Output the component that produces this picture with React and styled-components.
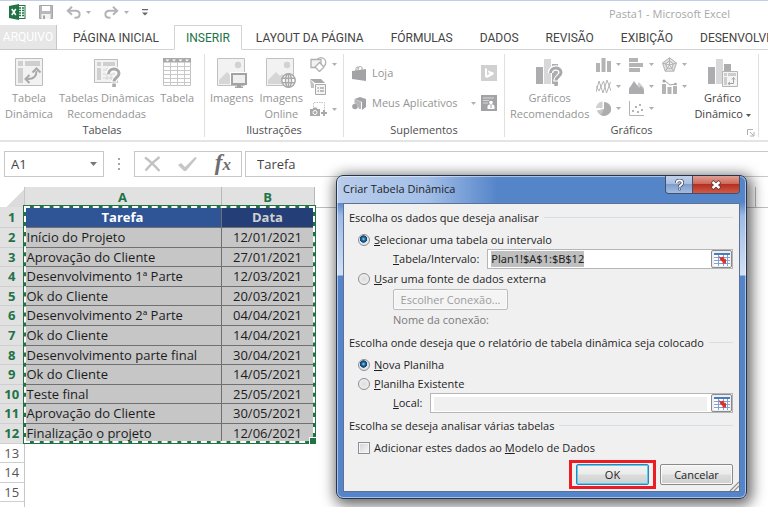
import React, { useEffect, useRef, useState } from 'react';
import styled, { createGlobalStyle, css } from 'styled-components';

const TABS = ['LAYOUT DA PÁGINA', 'FÓRMULAS', 'DADOS', 'REVISÃO', 'EXIBIÇÃO', 'DESENVOLVEDOR'];

const TASKS = [
  ['Início do Projeto', '12/01/2021'],
  ['Aprovação do Cliente', '27/01/2021'],
  ['Desenvolvimento 1ª Parte', '12/03/2021'],
  ['Ok do Cliente', '20/03/2021'],
  ['Desenvolvimento 2ª Parte', '04/04/2021'],
  ['Ok do Cliente', '14/04/2021'],
  ['Desenvolvimento parte final', '30/04/2021'],
  ['Ok do Cliente', '14/05/2021'],
  ['Teste final', '25/05/2021'],
  ['Aprovação do Cliente', '30/05/2021'],
  ['Finalização o projeto', '12/06/2021'],
];

/* ---------- icons ---------- */

const ExcelLogo = () => (
  <svg width="17" height="16" viewBox="0 0 17 16">
    <rect x="8" y="1.5" width="8" height="13" fill="#fff" stroke="#217346" />
    <path d="M10 4h2M13 4h2M10 6.5h2M13 6.5h2M10 9h2M13 9h2M10 11.5h2M13 11.5h2" stroke="#217346" strokeWidth="1.4" />
    <path d="M0 2l10-2v16L0 14z" fill="#217346" />
    <path d="M2.8 5l4 6M6.8 5l-4 6" stroke="#fff" strokeWidth="1.5" />
  </svg>
);

const SaveIcon = () => (
  <svg width="14" height="14" viewBox="0 0 14 14">
    <path d="M.5.5h13v13H.5z" fill="#b9b9bb" stroke="#a6a6a8" />
    <path d="M3 1h8v5H3z" fill="#fff" />
    <path d="M2.5 9h9v5h-9z" fill="#f3f3f3" />
    <path d="M4 10.5h2V14H4z" fill="#a6a6a8" />
  </svg>
);

const UndoIcon = ({ flip }) => (
  <svg width="15" height="13" viewBox="0 0 15 13">
    <g transform={flip ? 'translate(15 0) scale(-1 1)' : undefined} fill="none" stroke="#b4b4b6" strokeWidth="2">
      <path d="M6 .8L1.8 4.8 6 8.8" />
      <path d="M2 4.8h7.5c5.5 0 5.5 7 0 7H8.5" />
    </g>
  </svg>
);

const Caret = ({ color = '#b0b0b0' }) => (
  <svg width="5" height="3" viewBox="0 0 5 3">
    <path d="M0 0h5L2.500 3z" fill={color} />
  </svg>
);

const CustomizeIcon = () => (
  <svg width="6" height="7" viewBox="0 0 6 7">
    <path d="M0 0h6v1.200H0zM0 3.500h6L3 6.500z" fill="#666" />
  </svg>
);

const PivotIcon = () => (
  <svg width="28" height="28" viewBox="0 0 28 28">
    <path d="M.5.5h27v27H.5z" fill="#f2f2f2" stroke="#bdbdbd" />
    <path d="M3 3h5v5H3zM10 3h15v5H10zM3 10h5v15H3z" fill="#cfcfcf" />
    <path d="M12 21c7 .5 9.500-3 9.500-8" fill="none" stroke="#a9a9ab" strokeWidth="2" />
    <path d="M17.500 14.500l4-4 4 4M14.500 17l-4 4 4 4" fill="none" stroke="#a9a9ab" strokeWidth="2" />
  </svg>
);

const QuestionMark = ({ x, y }) => (
  <g transform={`translate(${x} ${y})`} fill="none">
    <path d="M1.500 6C1.500-.5 12-.5 12 5.500c0 4-5 4-5 9" stroke="#fff" strokeWidth="5.500" />
    <path d="M1.500 6C1.500-.5 12-.5 12 5.500c0 4-5 4-5 8" stroke="#a9a9ab" strokeWidth="3" />
    <path d="M5.300 15.500h3.500V19H5.300z" fill="#a9a9ab" />
  </g>
);

const PivotHelpIcon = () => (
  <svg width="28" height="30" viewBox="0 0 28 30">
    <path d="M1.500 1.500h23v23h-23z" fill="#f2f2f2" stroke="#bdbdbd" />
    <path d="M4 4h4v4H4zM10 4h12v4H10zM4 10h4v12H4z" fill="#cfcfcf" />
    <path d="M10 12h12M10 16h12M10 20h12M14 10v12M18 10v12" stroke="#d4d4d4" />
    <QuestionMark x="14" y="10" />
  </svg>
);

const TableIcon = () => (
  <svg width="28" height="28" viewBox="0 0 28 28">
    <path d="M.5.5h27v27H.5z" fill="#fff" stroke="#c2c2c2" />
    <path d="M0 0h28v4.500H0z" fill="#a9a9ab" />
    <path d="M2.500 1.500h4l-2 2zM9 1.500h4l-2 2zM15.500 1.500h4l-2 2zM22 1.500h4l-2 2z" fill="#fff" />
    <path d="M0 8.500h28M0 12.500h28M0 16.500h28M0 20.500h28M0 24.500h28M7.500 4v24M14.500 4v24M21.500 4v24" stroke="#c8c8c8" />
  </svg>
);

const PictureIcon = ({ online }) => (
  <svg width="30" height="30" viewBox="0 0 30 30">
    <path d="M.5.5h27v27H.5z" fill="#f3f2f3" stroke="#c0c0c0" />
    <path d="M2 26v-4l8-8 4 4 2-2 10 10z" fill="#d6d6d6" />
    <circle cx="21" cy="7" r="3.200" fill="#d2d2d2" />
    {online ? (
      <g fill="#fff" stroke="#a9a9ab" strokeWidth="1.500">
        <circle cx="22.500" cy="22.500" r="6.700" />
        <ellipse cx="22.500" cy="22.500" rx="3" ry="6.700" />
        <path d="M16 20.300h13M16 24.700h13M22.500 16v13" />
      </g>
    ) : (
      <g>
        <path d="M13 14h17v13H13z" fill="#fff" />
        <path d="M15 16h14v10H15z" fill="#efefef" stroke="#a3a3a5" strokeWidth="2" />
        <path d="M20 27h4v1.500h2V30h-8v-1.500h2z" fill="#a3a3a5" />
      </g>
    )}
  </svg>
);

const ShapesIcon = () => (
  <svg width="17" height="15" viewBox="0 0 17 15" fill="#fff" stroke="#b0b0b2" strokeWidth="1.300">
    <circle cx="11" cy="5.500" r="4.800" />
    <path d="M1 2.500h10v8H1z" fill="#f2f2f2" />
    <path d="M9.500 5.500L14 10l-4.500 4.500L5 10z" />
  </svg>
);

const SmartArtIcon = () => (
  <svg width="17" height="16" viewBox="0 0 17 16">
    <path d="M0 0h11l4 4H5z" fill="#a9a9ab" />
    <path d="M0 0l4 5v4H1z" fill="#c2c2c2" />
    <path d="M5.500 5.500h10v10h-10z" fill="#f4f4f4" stroke="#a9a9ab" />
    <path d="M7.500 9h1.500M10 9h4M7.500 12h1.500M10 12h4" stroke="#a9a9ab" strokeWidth="1.300" />
  </svg>
);

const ScreenshotIcon = () => (
  <svg width="17" height="15" viewBox="0 0 17 15">
    <path d="M3.500 5V.5h11V8" fill="none" stroke="#c4c4c4" strokeDasharray="1.500 1" />
    <path d="M0 7h2.500l1-1.500h3l1 1.500H10v7H0z" fill="#a9a9ab" />
    <circle cx="5" cy="10.500" r="2" fill="#a9a9ab" stroke="#fff" />
    <path d="M14 8v6M11 11h6" stroke="#a9a9ab" strokeWidth="2" />
  </svg>
);

const StoreIcon = () => (
  <svg width="15" height="15" viewBox="0 0 15 15">
    <path d="M0 5l14-2v12L0 13z" fill="#a3a3a5" />
    <path d="M4 5V2.500C4 .5 7 .5 7 2.500M6 4.500V2c0-2 4-2 4 0v2" fill="none" stroke="#a3a3a5" />
  </svg>
);

const AppsIcon = () => (
  <svg width="15" height="15" viewBox="0 0 15 15">
    <path d="M2.500 3L8 1l6 2v8l-4 3V6z" fill="#a3a3a5" />
    <path d="M2.500 3L9 6v7H7l-2-5-2.500-.5z" fill="#b5b5b7" />
    <circle cx="3" cy="10.500" r="2.800" fill="#a3a3a5" />
  </svg>
);

const BingIcon = () => (
  <svg width="16" height="16" viewBox="0 0 16 16">
    <path d="M0 0h16v16H0z" fill="#d0d0d0" />
    <path d="M4 3l2 .7v6.500l3-1.700-1.500-.8L6.800 5.500 12.500 7.500V9.500L6 13l-2-1.200z" fill="#fff" />
  </svg>
);

const PeopleIcon = () => (
  <svg width="16" height="16" viewBox="0 0 16 16">
    <path d="M0 0h16v16H0z" fill="#a3a3a5" />
    <path d="M2 3h11M2 5.500h6M2 8h5" stroke="#d8d8d8" />
    <circle cx="10" cy="7.500" r="1.800" fill="#fff" />
    <path d="M6.500 14v-3l1.500-1.500h4l1.500 1.500v3z" fill="#fff" />
    <path d="M10 10v3" stroke="#a3a3a5" />
  </svg>
);

const ChartHelpIcon = () => (
  <svg width="30" height="30" viewBox="0 0 30 30">
    <path d="M1 9h7v17H1zM17 6h6v20h-6z" fill="#adadaf" />
    <path d="M9 1h7v25H9z" fill="#d8d8d8" />
    <QuestionMark x="14" y="9" />
  </svg>
);

const PivotChartIcon = () => (
  <svg width="30" height="30" viewBox="0 0 30 30">
    <path d="M0 9h7v17H0zM16 6h7v9h-7z" fill="#adadaf" />
    <path d="M8 1h7v25H8z" fill="#d8d8d8" />
    <path d="M14.500 13.500h15v15h-15z" fill="#f4f4f4" stroke="#b4b4b4" />
    <path d="M16 15h3v3h-3zM20 15h8v3h-8zM16 19h3v8h-3z" fill="#cdcdcd" />
    <path d="M20.500 25.500h5V20M24 21.500l1.500-2 1.500 2M22 24l-2 1.500 2 1.500" fill="none" stroke="#a3a3a5" />
  </svg>
);

const charts = {
  column: <path d="M0 6h4v9H0zM5.500 1h4v14h-4zM11 4h4v11h-4z" fill="#b4b4b6" />,
  bar: <path d="M0 1h9v4H0zM0 6h14v4H0zM0 11h11v4H0z" fill="#b4b4b6" />,
  radar: (
    <g fill="#e2e2e2" stroke="#b2b2b4">
      <path d="M7.500.8l7 5.200-2.700 8.200H3.200L.5 6z" />
      <path d="M7.500 4l3.800 2.800-1.500 4.500H5.200L3.700 6.800z" fill="#f0f0f0" />
      <path d="M7.500.8V8M14.500 6l-7 2M11.800 14.200L7.500 8M3.200 14.200L7.500 8M.5 6l7 2" />
    </g>
  ),
  line: (
    <g fill="none" stroke="#b4b4b6">
      <path d="M0 13l3-11 4 12 4-13 4 11" />
      <path d="M0 7l3 5L7.500 2l3 12 4-11" />
    </g>
  ),
  area: (
    <g>
      <path d="M0 9l3-3 3 5 4-8 5 6v5H0z" fill="#cfcfcf" />
      <path d="M0 15v-5l5-8 5 7 2-2 3 4v4z" fill="#adadaf" />
    </g>
  ),
  combo: (
    <g>
      <path d="M0 5h4v10H0zM5.500 8h4v7h-4zM11 7h4v8h-4z" fill="#b4b4b6" />
      <path d="M1 2h2l5 4 6-1" fill="none" stroke="#a3a3a5" />
      <circle cx="2" cy="2" r="1.500" fill="#a3a3a5" />
      <circle cx="13.500" cy="5" r="1.300" fill="#a3a3a5" />
    </g>
  ),
  pie: (
    <g>
      <path d="M8 1a7 7 0 1 1-6.500 9L8 8z" fill="#adadaf" />
      <path d="M6.500.5v6.500H0A7 7 0 0 1 6.500.5z" fill="#d0d0d0" />
      <path d="M8 8l-7 1.500A7 7 0 0 0 5 14z" fill="#c6c6c6" />
    </g>
  ),
  scatter: (
    <g>
      <path d="M.5 0v14.500H15" fill="none" stroke="#b4b4b6" />
      <path d="M3 9h2v2H3zM6 5h2v2H6zM8 10h2v2H8zM10 3h2v2h-2zM12 8h2v2h-2z" fill="#b4b4b6" />
    </g>
  ),
};

const ChartIcon = ({ kind }) => (
  <svg width="15" height="15" viewBox="0 0 15 15">
    {charts[kind]}
  </svg>
);

const LauncherIcon = () => (
  <svg width="8" height="8" viewBox="0 0 8 8">
    <path d="M.5 6V.5H6M3 3l3.500 3.500M7 3v4H3" fill="none" stroke="#b0b0b0" />
  </svg>
);

const CancelIcon = () => (
  <svg width="17" height="16" viewBox="0 0 17 16">
    <path d="M1 1.500C6 5 11 10 15.500 15M15.500 1C10 5 5 10 1.500 14.500" fill="none" stroke="#c2c2c2" strokeWidth="2.400" />
  </svg>
);

const EnterIcon = () => (
  <svg width="20" height="16" viewBox="0 0 20 16">
    <path d="M0 9l3-2 4 4L17 1l2 1L8 15H6z" fill="#c6c6c6" />
  </svg>
);

const RangeIcon = () => (
  <svg width="16" height="13" viewBox="0 0 16 13">
    <path d="M0 0h16v13H0z" fill="#fff" />
    <path d="M0 0h16v2H0z" fill="#4a7cc4" />
    <path d="M0 4.500h16M0 7.500h16M0 10.500h16M4.500 2v11M9.500 2v11M13.500 2v11" stroke="#7fa3d8" />
    <path d="M5 3l2 1.500L9 3.500l2 3 1-1v5H7.500l1.500-1-3-3z" fill="#d8322a" />
  </svg>
);

const HelpGlyph = () => (
  <svg width="9" height="12" viewBox="0 0 9 12" fill="none">
    <path d="M1.500 4C1.500.5 7.500.5 7.500 4c0 2-3 2-3 4" stroke="#4a5368" strokeWidth="3.400" />
    <path d="M1.500 4C1.500.5 7.500.5 7.500 4c0 2-3 2-3 4" stroke="#fff" strokeWidth="1.600" />
    <path d="M3.500 9h2v2h-2z" fill="#fff" stroke="#4a5368" strokeWidth=".7" />
  </svg>
);

const CloseGlyph = () => (
  <svg width="12" height="10" viewBox="0 0 12 10">
    <path d="M2 1.500l8 7M10 1.500l-8 7" stroke="#5d3a3a" strokeWidth="4" />
    <path d="M2.500 2l7 6M9.500 2l-7 6" stroke="#fff" strokeWidth="2.400" />
  </svg>
);

const GripIcon = () => (
  <svg width="10" height="10" viewBox="0 0 10 10">
    <path d="M1 10l9-9M5 10l5-5" stroke="#8f8f8f" strokeWidth="1.200" />
  </svg>
);

/* ---------- app ---------- */

const RibbonButton = ({ icon, lines, dark, caret }) => (
  <BigButton type="button" $dark={dark}>
    <IconBox>{icon}</IconBox>
    {lines.map((line, i) => (
      <span key={line}>
        {line}
        {caret && i === lines.length - 1 && (
          <>
            {' '}
            <Caret color="#555" />
          </>
        )}
      </span>
    ))}
  </BigButton>
);

const Ribbon = () => (
  <RibbonBar>
    <Group $width={205}>
      <Tools>
        <RibbonButton icon={<PivotIcon />} lines={['Tabela', 'Dinâmica']} />
        <RibbonButton icon={<PivotHelpIcon />} lines={['Tabelas Dinâmicas', 'Recomendadas']} />
        <RibbonButton icon={<TableIcon />} lines={['Tabela']} />
      </Tools>
      <GroupName>Tabelas</GroupName>
    </Group>
    <Group $width={139}>
      <Tools>
        <RibbonButton icon={<PictureIcon />} lines={['Imagens']} />
        <RibbonButton icon={<PictureIcon online />} lines={['Imagens', 'Online']} />
        <SmallGrid $columns={1}>
          <SmallButton type="button" aria-label="Formas">
            <ShapesIcon />
            <Caret />
          </SmallButton>
          <SmallButton type="button" aria-label="SmartArt">
            <SmartArtIcon />
          </SmallButton>
          <SmallButton type="button" aria-label="Instantâneo">
            <ScreenshotIcon />
            <Caret />
          </SmallButton>
        </SmallGrid>
      </Tools>
      <GroupName>Ilustrações</GroupName>
    </Group>
    <Group $width={161}>
      <Addins>
        <AddinRow>
          <SmallButton type="button">
            <StoreIcon />
            Loja
          </SmallButton>
          <SmallButton type="button" aria-label="Bing Maps">
            <BingIcon />
          </SmallButton>
        </AddinRow>
        <AddinRow>
          <SmallButton type="button">
            <AppsIcon />
            Meus Aplicativos
          </SmallButton>
          <SmallButton type="button" aria-label="Mais aplicativos">
            <Caret />
            <PeopleIcon />
          </SmallButton>
        </AddinRow>
      </Addins>
      <GroupName>Suplementos</GroupName>
    </Group>
    <Group $width={254}>
      <Tools>
        <RibbonButton icon={<ChartHelpIcon />} lines={['Gráficos', 'Recomendados']} />
        <SmallGrid $columns={3}>
          {['column', 'bar', 'radar', 'line', 'area', 'combo', 'pie', 'scatter'].map((kind) => (
            <SmallButton type="button" key={kind} aria-label={kind}>
              <ChartIcon kind={kind} />
              <Caret />
            </SmallButton>
          ))}
        </SmallGrid>
        <RibbonButton icon={<PivotChartIcon />} lines={['Gráfico', 'Dinâmico']} dark caret />
      </Tools>
      <GroupFooter>
        <GroupName>Gráficos</GroupName>
        <Launcher type="button" aria-label="Opções de gráficos">
          <LauncherIcon />
        </Launcher>
      </GroupFooter>
    </Group>
  </RibbonBar>
);

const Worksheet = () => (
  <SheetArea>
    <Grid>
      <colgroup>
        <col width="24" />
        <col width="197" />
        <col width="93" />
        <col width="441" />
        <col />
      </colgroup>
      <thead>
        <tr>
          <Corner />
          <ColumnHead $on>A</ColumnHead>
          <ColumnHead $on>B</ColumnHead>
          <ColumnHead />
          <ColumnHead />
        </tr>
      </thead>
      <tbody>
        <tr>
          <RowHead $on>1</RowHead>
          <TitleCell>Tarefa</TitleCell>
          <TitleCell $dim>Data</TitleCell>
        </tr>
        {TASKS.map(([task, date], i) => (
          <tr key={date}>
            <RowHead $on>{i + 2}</RowHead>
            <Cell>{task}</Cell>
            <Cell $center>{date}</Cell>
          </tr>
        ))}
        {[13, 14, 15, 16].map((n) => (
          <tr key={n}>
            <RowHead>{n < 16 ? n : ''}</RowHead>
          </tr>
        ))}
      </tbody>
    </Grid>
    <Selection />
  </SheetArea>
);

const PivotDialog = () => {
  const rangeInput = useRef(null);
  const [source, setSource] = useState('range');
  const [target, setTarget] = useState('new');

  useEffect(() => {
    rangeInput.current.select();
  }, []);

  return (
    <Dialog role="dialog" aria-labelledby="dialog-title">
      <DialogBar>
        <DialogTitle id="dialog-title">Criar Tabela Dinâmica</DialogTitle>
        <WindowButtons>
          <WindowButton type="button" aria-label="Ajuda">
            <HelpGlyph />
          </WindowButton>
          <WindowButton type="button" aria-label="Fechar" $close>
            <CloseGlyph />
          </WindowButton>
        </WindowButtons>
      </DialogBar>
      <DialogBody>
        <Heading>Escolha os dados que deseja analisar</Heading>
        <Option>
          <Radio type="radio" name="source" checked={source === 'range'} onChange={() => setSource('range')} />
          <span>
            <u>S</u>elecionar uma tabela ou intervalo
          </span>
        </Option>
        <Field>
          <label htmlFor="range">
            <u>T</u>abela/Intervalo:
          </label>
          <RangeBox>
            <RangeInput id="range" ref={rangeInput} defaultValue="Plan1!$A$1:$B$12" />
            <RangeButton type="button" aria-label="Selecionar intervalo">
              <RangeIcon />
            </RangeButton>
          </RangeBox>
        </Field>
        <Option>
          <Radio type="radio" name="source" checked={source === 'external'} onChange={() => setSource('external')} />
          <span>
            <u>U</u>sar uma fonte de dados externa
          </span>
        </Option>
        <Indent>
          <ConnectionButton type="button" disabled>
            Escolher Conexão...
          </ConnectionButton>
          <Muted>Nome da conexão:</Muted>
        </Indent>
        <Heading>Escolha onde deseja que o relatório de tabela dinâmica seja colocado</Heading>
        <Option>
          <Radio type="radio" name="target" checked={target === 'new'} onChange={() => setTarget('new')} />
          <span>
            <u>N</u>ova Planilha
          </span>
        </Option>
        <Option>
          <Radio type="radio" name="target" checked={target === 'existing'} onChange={() => setTarget('existing')} />
          <span>
            <u>P</u>lanilha Existente
          </span>
        </Option>
        <Field>
          <label htmlFor="place">
            <u>L</u>ocal:
          </label>
          <RangeBox>
            <RangeInput id="place" disabled />
            <RangeButton type="button" aria-label="Selecionar local">
              <RangeIcon />
            </RangeButton>
          </RangeBox>
        </Field>
        <Heading>Escolha se deseja analisar várias tabelas</Heading>
        <Option>
          <Check type="checkbox" />
          <span>
            Adicionar estes dados ao <u>M</u>odelo de Dados
          </span>
        </Option>
        <Actions>
          <Highlight>
            <PushButton type="button" $primary>
              OK
            </PushButton>
          </Highlight>
          <PushButton type="button">Cancelar</PushButton>
        </Actions>
        <Grip>
          <GripIcon />
        </Grip>
      </DialogBody>
    </Dialog>
  );
};

const App = () => (
  <Page>
    <GlobalStyle />
    <TitleBar>
      <ExcelLogo />
      <QuickButton type="button" aria-label="Salvar">
        <SaveIcon />
      </QuickButton>
      <QuickButton type="button" aria-label="Desfazer">
        <UndoIcon />
        <Caret />
      </QuickButton>
      <QuickButton type="button" aria-label="Refazer">
        <UndoIcon flip />
        <Caret />
      </QuickButton>
      <QuickButton type="button" aria-label="Personalizar">
        <CustomizeIcon />
      </QuickButton>
      <WindowTitle>Pasta1 - Microsoft Excel</WindowTitle>
    </TitleBar>
    <TabBar>
      <FileTab type="button">ARQUIVO</FileTab>
      <Tab type="button" $first>
        PÁGINA INICIAL
      </Tab>
      <Tab type="button" $active>
        INSERIR
      </Tab>
      {TABS.map((name) => (
        <Tab type="button" key={name}>
          {name}
        </Tab>
      ))}
    </TabBar>
    <Ribbon />
    <FormulaBar>
      <NameBox>
        <BarInput aria-label="Caixa de nome" defaultValue="A1" />
        <BarButton type="button" aria-label="Nomes">
          <svg width="7" height="4" viewBox="0 0 7 4">
            <path d="M0 0h7L3.500 4z" fill="#777" />
          </svg>
        </BarButton>
      </NameBox>
      <Dots>
        <i />
        <i />
        <i />
      </Dots>
      <FxBox>
        <BarButton type="button" aria-label="Cancelar edição">
          <CancelIcon />
        </BarButton>
        <BarButton type="button" aria-label="Inserir valor">
          <EnterIcon />
        </BarButton>
        <BarButton type="button">
          <Fx>
            f<small>x</small>
          </Fx>
        </BarButton>
      </FxBox>
      <FormulaBox>
        <BarInput aria-label="Fórmula" defaultValue="Tarefa" />
      </FormulaBox>
    </FormulaBar>
    <Worksheet />
    <PivotDialog />
  </Page>
);

/* ---------- styles ---------- */

const GlobalStyle = createGlobalStyle`
  * {
    box-sizing: border-box;
  }
  body {
    margin: 0;
    background: #fff;
    color: #444;
    font: 11px/16px 'Open Sans', 'Noto Sans', sans-serif;
  }
  button, input {
    margin: 0;
    padding: 0;
    border: none;
    border-radius: 0;
    background: none;
    color: inherit;
    font: inherit;
    outline: none;
  }
  svg {
    flex: none;
  }
`;
const Page = styled.div`
  position: relative;
  display: flex;
  flex-direction: column;
  height: 100vh;
  overflow: hidden;
`;

const TitleBar = styled.header`
  display: flex;
  align-items: center;
  gap: 13px;
  height: 25px;
  padding: 0 38px 2px 9px;
  border-top: 1px solid #c3cde6;
`;
const QuickButton = styled.button`
  display: flex;
  align-items: center;
  gap: 5px;
`;
const WindowTitle = styled.span`
  margin: 3px 0 0 auto;
  color: #a8a8a8;
`;

const TabBar = styled.nav`
  display: flex;
  height: 25px;
  font: 12px/16px Roboto, 'Open Sans', sans-serif;
  &::after {
    content: '';
    flex: 1;
    border-bottom: 1px solid #d4d4d4;
  }
`;
const Tab = styled.button`
  flex: none;
  padding: 1px 13px 0 14px;
  border-bottom: 1px solid #d4d4d4;
  ${({ $first }) =>
    $first &&
    css`
      padding: 1px 15px 0 16px;
    `}
  ${({ $active }) =>
    $active &&
    css`
      padding: 0 11px;
      border: 1px solid #d4d4d4;
      border-bottom-color: #fff;
      color: #217346;
    `}
`;
const FileTab = styled.button`
  flex: none;
  width: 57px;
  border-right: 1px solid #c6c6c6;
  border-bottom: 1px solid #c6c6c6;
  background: #e6e6e6;
  color: #fff;
`;

const RibbonBar = styled.div`
  display: flex;
  height: 92px;
  padding: 4px 0 3px;
  border-bottom: 2px solid #e4e4e4;
  color: #959595;
`;
const Group = styled.section`
  display: flex;
  flex-direction: column;
  justify-content: space-between;
  flex: none;
  width: ${({ $width }) => $width}px;
  border-right: 1px solid #e0e0e0;
`;
const Tools = styled.div`
  display: flex;
  align-items: flex-start;
  gap: 6px;
  padding-left: 5px;
`;
const BigButton = styled.button`
  display: flex;
  flex-direction: column;
  align-items: center;
  padding-top: 4px;
  color: ${({ $dark }) => ($dark ? '#444' : 'inherit')};
  white-space: nowrap;
  span svg {
    vertical-align: middle;
  }
`;
const IconBox = styled.div`
  height: 32px;
`;
const GroupName = styled.div`
  padding-bottom: 1px;
  text-align: center;
  line-height: 12px;
  color: #4e4e4e;
`;
const GroupFooter = styled.div`
  position: relative;
`;
const Launcher = styled.button`
  position: absolute;
  right: 3px;
  bottom: 0;
  line-height: 8px;
`;
const SmallGrid = styled.div`
  display: grid;
  grid-template-columns: repeat(${({ $columns }) => $columns}, auto);
  gap: 7px 8px;
  padding: 3px 1px 0;
`;
const SmallButton = styled.button`
  display: flex;
  align-items: center;
  gap: 5px;
`;
const Addins = styled.div`
  display: flex;
  flex-direction: column;
  gap: 14px;
  padding: 11px 7px 0 8px;
`;
const AddinRow = styled.div`
  display: flex;
  justify-content: space-between;
`;

const FormulaBar = styled.div`
  display: flex;
  height: 45px;
  padding: 9px 0 10px 4px;
  font-size: 13px;
`;
const NameBox = styled.div`
  display: flex;
  width: 100px;
  padding: 0 6px;
  border: 1px solid #c8c8c8;
`;
const BarInput = styled.input`
  flex: 1;
  min-width: 0;
`;
const BarButton = styled.button`
  display: flex;
  align-items: center;
`;
const Dots = styled.div`
  display: flex;
  flex-direction: column;
  justify-content: center;
  gap: 3px;
  padding: 0 14px;
  i {
    width: 2px;
    height: 2px;
    background: #a6a6a6;
  }
`;
const FxBox = styled.div`
  display: flex;
  justify-content: space-between;
  width: 108px;
  padding: 0 10px 0 9px;
  border: 1px solid #c8c8c8;
`;
const Fx = styled.em`
  font: italic bold 23px/24px 'Liberation Serif', serif;
  color: #6e6e6e;
  small {
    font-size: 17px;
  }
`;
const FormulaBox = styled.div`
  display: flex;
  flex: 1;
  margin-left: 3px;
  padding-left: 11px;
  border: 1px solid #c8c8c8;
  border-right: none;
`;

const SheetArea = styled.main`
  position: relative;
  flex: 1;
  min-height: 0;
`;
const Grid = styled.table`
  width: 100%;
  border-collapse: collapse;
  table-layout: fixed;
  color: #1c1c1c;
  font-size: 13px;
  line-height: 16px;
  tr {
    height: 20px;
  }
  tbody tr:nth-child(5n),
  tbody tr:nth-child(5n + 3) {
    height: 19px;
  }
  th,
  td {
    padding: 0;
  }
`;
const Corner = styled.td`
  background: linear-gradient(135deg, #fff 60%, #dcdcdc 60%);
  border-right: 1px solid #c6c6c6;
`;
const ColumnHead = styled.th`
  border-right: 1px solid #b8b8b8;
  border-bottom: 1px solid #bdbdbd;
  &:last-child {
    border-right: none;
  }
  ${({ $on }) =>
    $on &&
    css`
      background: #e1e1e1;
      color: #217346;
    `}
`;
const RowHead = styled.th`
  border-right: 1px solid #c6c6c6;
  border-bottom: 1px solid #cfcfcf;
  background: ${({ $on }) => ($on ? '#e1e1e1' : '#fff')};
  color: ${({ $on }) => ($on ? '#217346' : '#555')};
  font-weight: ${({ $on }) => ($on ? 700 : 400)};
`;
const Cell = styled.td`
  && {
    padding-left: ${({ $center }) => ($center ? 0 : 2)}px;
  }
  border: 1px solid #707070;
  background: #c6c6c6;
  text-align: ${({ $center }) => ($center ? 'center' : 'left')};
  white-space: nowrap;
`;
const TitleCell = styled.td`
  border: 1px solid #707070;
  background: ${({ $dim }) => ($dim ? '#243f77' : '#2f5597')};
  color: ${({ $dim }) => ($dim ? '#d0d0d0' : '#fff')};
  font-weight: 700;
  text-align: center;
`;
// marching ants round A1:B12, with the fill handle in its corner
const Selection = styled.div`
  position: absolute;
  top: 18px;
  left: 23px;
  width: 293px;
  height: 239px;
  border: 3px solid #217346;
  pointer-events: none;
  &::before {
    content: '';
    position: absolute;
    inset: -2px;
    border: 2px dashed #fff;
  }
  &::after {
    content: '';
    position: absolute;
    right: -4px;
    bottom: -4px;
    width: 6px;
    height: 6px;
    border: 1px solid #fff;
    background: #217346;
  }
`;

const Dialog = styled.section`
  position: absolute;
  top: 175px;
  left: 336px;
  width: 411px;
  padding: 0 6px 6px;
  border: 1px solid #26344d;
  border-radius: 7px;
  background:
    linear-gradient(90deg, #b9cdec, #a3bfe8 90px, rgba(84, 132, 200, 0) 160px) 0 0 / 100% 27px no-repeat,
    linear-gradient(#5585c9 26px, #9dbbe6 40px, #d3e1f5 99px, #5484c9 100px);
  box-shadow:
    inset 0 0 0 1px rgba(255, 255, 255, 0.5),
    2px 3px 14px 3px rgba(0, 0, 0, 0.6);
  color: #1e1e1e;
`;
const DialogBar = styled.div`
  display: flex;
  justify-content: space-between;
  align-items: flex-start;
  height: 27px;
`;
const DialogTitle = styled.h1`
  margin: 5px 0 0;
  font: inherit;
`;
const WindowButtons = styled.div`
  display: flex;
  border: 1px solid #44506a;
  border-top: none;
  border-radius: 0 0 4px 4px;
  overflow: hidden;
`;
const WindowButton = styled.button`
  display: flex;
  justify-content: center;
  align-items: center;
  width: ${({ $close }) => ($close ? 46 : 27)}px;
  height: 17px;
  border-right: ${({ $close }) => ($close ? 'none' : '1px solid #44506a')};
  background: ${({ $close }) =>
    $close
      ? 'linear-gradient(#e0a095, #cf6a5c 45%, #b5301f 50%, #cf5a48)'
      : 'linear-gradient(#c3d2ea, #a9bee0 45%, #7f9dcb 50%, #a4bce2)'};
`;
const DialogBody = styled.div`
  position: relative;
  padding: 1px 6px 2px 5px;
  border: 1px solid #5d7195;
  background: #f0f0f0;
`;
const Heading = styled.h2`
  display: flex;
  align-items: center;
  gap: 5px;
  height: 25px;
  margin: 0;
  font: inherit;
  white-space: nowrap;
  &::after {
    content: '';
    flex: 1;
    height: 1px;
    background: #d5dfe5;
  }
`;
const Option = styled.label`
  display: flex;
  align-items: center;
  gap: 4px;
  height: 19px;
  padding-left: 9px;
`;
const Radio = styled.input`
  appearance: none;
  width: 12px;
  height: 12px;
  border: 1px solid #8c8f94;
  border-radius: 50%;
  background: radial-gradient(#dcdcdc, #f6f6f6);
  &:checked {
    background: radial-gradient(circle at 45% 40%, #9fdcf5, #1f6fa8 20%, #143c66 42%, #dfe6ea 48%);
  }
`;
const Check = styled.input`
  appearance: none;
  width: 12px;
  height: 12px;
  border: 1px solid #8c8f94;
  background: linear-gradient(135deg, #cfd2d6, #f8f8f8);
  box-shadow: inset 0 0 0 1px #f4f4f4;
`;
const Field = styled.div`
  display: flex;
  align-items: center;
  gap: 8px;
  margin-left: 44px;
`;
const RangeBox = styled.div`
  display: flex;
  flex: 1;
  height: 20px;
  border: 1px solid #b4b6ba;
  background: #fff;
`;
const RangeInput = styled.input`
  flex: 1;
  min-width: 0;
  padding: 0 3px;
  font-family: 'Noto Sans', sans-serif;
  &::selection {
    background: #bfbfbf;
    color: #1e1e1e;
  }
  &:disabled {
    margin: 3px 4px 1px 3px;
    background: #f0f0f0;
  }
`;
const RangeButton = styled.button`
  display: flex;
  justify-content: center;
  align-items: center;
  width: 21px;
  border: 1px solid #8a8a8a;
  border-radius: 2px;
  background: #eee;
`;
const Indent = styled.div`
  margin: 1px 0 0 44px;
`;
const buttonFace = css`
  border: 1px solid #8a8a8a;
  border-radius: 2px;
  background: linear-gradient(#f3f3f3, #ebebeb 48%, #dcdcdc 52%, #d0d0d0);
  box-shadow: inset 0 0 0 1px #fafafa;
`;
const ConnectionButton = styled.button`
  ${buttonFace}
  display: block;
  width: 115px;
  height: 21px;
  border-color: #bcbcbc;
  background: #f4f4f4;
  color: #9c9c9c;
`;
const Muted = styled.div`
  line-height: 20px;
  color: #7a7a7a;
`;
const Actions = styled.div`
  display: flex;
  justify-content: flex-end;
  align-items: center;
  gap: 4px;
  padding-top: 3px;
`;
const Highlight = styled.span`
  padding: 1px 4px;
  border: 3px solid #ed1c24;
`;
const PushButton = styled.button`
  ${buttonFace}
  display: block;
  width: 73px;
  height: 21px;
  ${({ $primary }) =>
    $primary &&
    css`
      border-color: #3c7fb1;
      box-shadow: inset 0 0 0 1px #48d2f5;
    `}
`;
const Grip = styled.span`
  position: absolute;
  right: 0;
  bottom: 0;
  line-height: 10px;
  svg {
    display: block;
  }
`;

export default App;
